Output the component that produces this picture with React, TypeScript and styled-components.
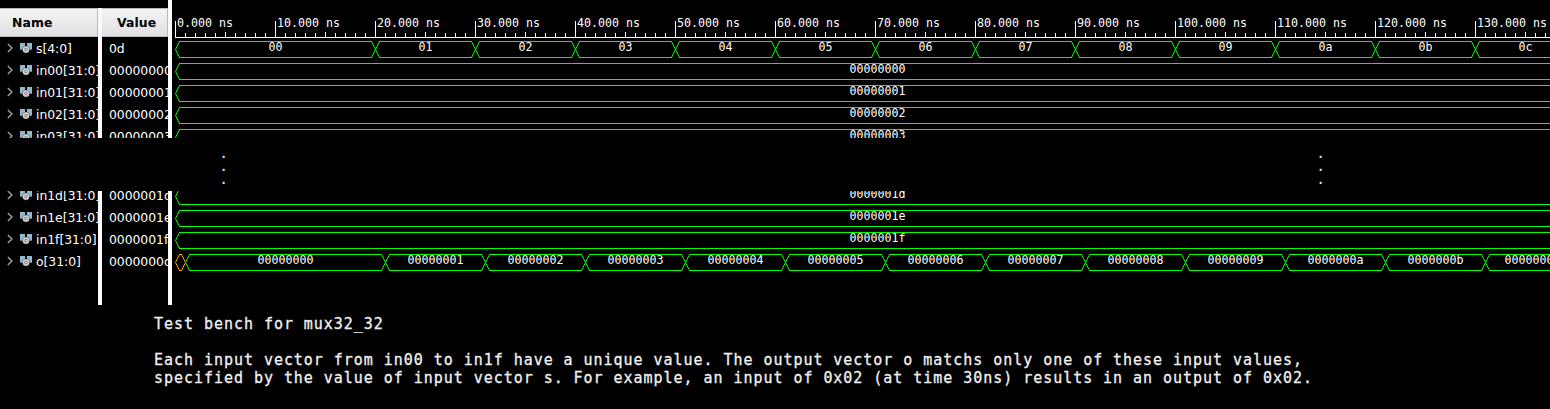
import React from "react";
import styled, { createGlobalStyle } from "styled-components";

const GlobalStyle = createGlobalStyle`
  * { box-sizing: border-box; }
  body { margin: 0; background: #000; overflow: hidden; }
`;

const ROW = 22;
const WAVE_WIDTH = 1378;
const GREEN = "#00ff00";
const ORANGE = "#ffa500";

const Page = styled.main`
  width: 1550px;
  height: 409px;
  overflow: hidden;
  background: #000;
  color: #fff;
  font-family: "DejaVu Sans", sans-serif;
`;

const Panel = styled.section<{ $height: number }>`
  display: flex;
  height: ${(p) => p.$height}px;
  overflow: hidden;
`;

const Column = styled.div<{ $width: number; $top?: number }>`
  flex: none;
  width: ${(p) => p.$width}px;
  padding-top: ${(p) => p.$top ?? 0}px;
  overflow: hidden;
`;

const Divider = styled.div<{ $top?: number }>`
  flex: none;
  width: 4px;
  margin-top: ${(p) => p.$top ?? 0}px;
  background: #fafaff;
`;

const HeaderCell = styled.div<{ $indent: number }>`
  height: 29px;
  padding-left: ${(p) => p.$indent}px;
  border: 1px solid #b9b9b9;
  border-left: 0;
  background: linear-gradient(#f4f4f4, #e0e0e2);
  color: #000;
  font-size: 12.4px;
  font-weight: bold;
  letter-spacing: 0.1px;
  line-height: 28px;
`;

const Rows = styled.div<{ $shift?: number }>`
  margin-top: ${(p) => p.$shift ?? 0}px;
`;

const NameRow = styled.div`
  display: flex;
  align-items: center;
  height: ${ROW}px;
  padding-left: 7px;
  font-size: 12.4px;
  letter-spacing: -0.04px;
  white-space: nowrap;
`;

const ValueRow = styled(NameRow)``;

const RowIcon = styled.svg<{ $gap: number }>`
  flex: none;
  margin-right: ${(p) => p.$gap}px;
`;

const Waves = styled.svg`
  display: block;
  flex: none;
  font-family: "DejaVu Sans Mono", monospace;
  font-size: 11.63px;
  fill: #fff;
`;

const Gap = styled.div`
  display: flex;
  height: 53px;
  padding: 10px 0 0 220px;
  gap: 1090px;
`;

const Dots = styled.div`
  width: 7px;
  font: bold 12px/13px "DejaVu Sans Mono", monospace;
  color: #ddd;
  white-space: pre-line;
`;

const Caption = styled.p`
  margin: 0;
  padding: 10px 0 0 154px;
  color: #f0f0f0;
  font: 15px/18px "DejaVu Sans Mono", monospace;
  letter-spacing: 0.96px;
  -webkit-text-stroke: 0.3px #f0f0f0;
  white-space: pre;
`;

type Segment = { from: number; to: number; label?: string; color?: string; center?: number };
type Signal = { name: string; value: string; segments: Segment[] };

const constant = (label: string): Segment[] => [{ from: 3, to: 1500, label, center: 705.5 }];

const steps = (start: number, labels: string[]): Segment[] =>
  labels.map((label, i) => ({ from: start + i * 100, to: start + (i + 1) * 100, label }));

const input = (id: string): Signal => {
  const value = id.padStart(8, "0");
  return { name: `in${id}[31:0]`, value, segments: constant(value) };
};

const upper: Signal[] = [
  {
    name: "s[4:0]",
    value: "0d",
    segments: [
      { from: 3, to: 203, label: "00" },
      ...steps(203, ["01", "02", "03", "04", "05", "06", "07", "08", "09", "0a", "0b", "0c"]),
    ],
  },
  ...["00", "01", "02", "03"].map(input),
];

const lower: Signal[] = [
  ...["1d", "1e", "1f"].map(input),
  {
    name: "o[31:0]",
    value: "0000000d",
    segments: [
      { from: 3, to: 13, color: ORANGE },
      { from: 13, to: 213, label: "00000000" },
      ...steps(213, ["1", "2", "3", "4", "5", "6", "7", "8", "9", "a", "b"].map((d) => d.padStart(8, "0"))),
      { from: 1313, to: 1413, label: "0000000c", center: 1360.5 },
    ],
  },
];

const Chevron = () => (
  <RowIcon $gap={7} width="6" height="10" viewBox="0 0 6 10">
    <path d="M.8 1 5 5 .8 9" fill="none" stroke="#a8a8a8" strokeWidth="1.3" />
  </RowIcon>
);

const BusIcon = () => (
  <RowIcon $gap={4} width="12" height="11" viewBox="0 0 12 11">
    <path d="M0 0h5v6H0zM7 0h5v6H7z" fill="#93b9cf" />
    <path d="M0 6.5h3M9 6.5h3" stroke="#777" />
    <circle cx="6" cy="6.5" r="3.7" fill="#555" />
    <circle cx="6" cy="6.5" r="2.5" fill="#888" stroke="#d2d2d2" strokeWidth="1.4" />
    <circle cx="6" cy="6.5" r=".8" fill="#eee" />
  </RowIcon>
);

const Ruler = () => (
  <g>
    <path d={`M3 37.5H${WAVE_WIDTH}`} stroke="#fff" shapeRendering="crispEdges" />
    {Array.from({ length: 138 }, (_, i) => {
      const top = i % 10 === 0 ? 21 : i % 5 === 0 ? 32 : 33;
      return <path key={i} d={`M${3.5 + i * 10} ${top}V38`} stroke="#fff" shapeRendering="crispEdges" />;
    })}
    {Array.from({ length: 14 }, (_, i) => (
      <text key={i} x={5 + i * 100} y={27}>{`${i * 10}.000 ns`}</text>
    ))}
  </g>
);

const Wave = ({ segments, top }: { segments: Segment[]; top: number }) => (
  <g>
    {segments.map(({ from, to, label, color = GREEN, center }) => {
      const a = from + 0.5;
      const b = to + 0.5;
      const y = top + 3.5;
      return (
        <g key={from}>
          <path d={`M${a + 3.5} ${y}H${b - 3.5}M${a + 3.5} ${y + 16}H${b - 3.5}`} stroke={color} shapeRendering="crispEdges" />
          <path
            d={`M${a + 4} ${y}L${a} ${y + 8}L${a + 4} ${y + 16}M${b - 4} ${y}L${b} ${y + 8}L${b - 4} ${y + 16}`}
            fill="none"
            stroke={color}
            strokeLinejoin="bevel"
          />
          {label && (
            <text x={center ?? (from + to) / 2 + 0.5} y={top + 13} textAnchor="middle">
              {label}
            </text>
          )}
        </g>
      );
    })}
  </g>
);

type SignalPanelProps = { signals: Signal[]; height: number; header?: boolean; shift?: number };

const SignalPanel = ({ signals, height, header, shift = 0 }: SignalPanelProps) => {
  const top = header ? 8 : 0;
  const waveTop = header ? 38 : shift;
  const rowShift = header ? 0 : shift - 1;
  return (
    <Panel $height={height}>
      <Column $width={98} $top={top}>
        {header && <HeaderCell $indent={12}>Name</HeaderCell>}
        <Rows $shift={rowShift}>
          {signals.map((s) => (
            <NameRow key={s.name}>
              <Chevron />
              <BusIcon />
              {s.name}
            </NameRow>
          ))}
        </Rows>
      </Column>
      <Divider $top={top} />
      <Column $width={66} $top={top}>
        {header && <HeaderCell $indent={15}>Value</HeaderCell>}
        <Rows $shift={rowShift}>
          {signals.map((s) => (
            <ValueRow key={s.name}>{s.value}</ValueRow>
          ))}
        </Rows>
      </Column>
      <Divider />
      <Waves width={WAVE_WIDTH} height={height}>
        {header && <Ruler />}
        {signals.map((s, i) => (
          <Wave key={s.name} segments={s.segments} top={waveTop + i * ROW} />
        ))}
      </Waves>
    </Panel>
  );
};

export default function App() {
  return (
    <Page>
      <GlobalStyle />
      <SignalPanel signals={upper} height={138} header />
      <Gap>
        <Dots>{".\n.\n."}</Dots>
        <Dots>{".\n.\n."}</Dots>
      </Gap>
      <SignalPanel signals={lower} height={114} shift={-6} />
      <Caption>
        {`Test bench for mux32_32

Each input vector from in00 to in1f have a unique value. The output vector o matchs only one of these input values,
specified by the value of input vector s. For example, an input of 0x02 (at time 30ns) results in an output of 0x02.`}
      </Caption>
    </Page>
  );
}
